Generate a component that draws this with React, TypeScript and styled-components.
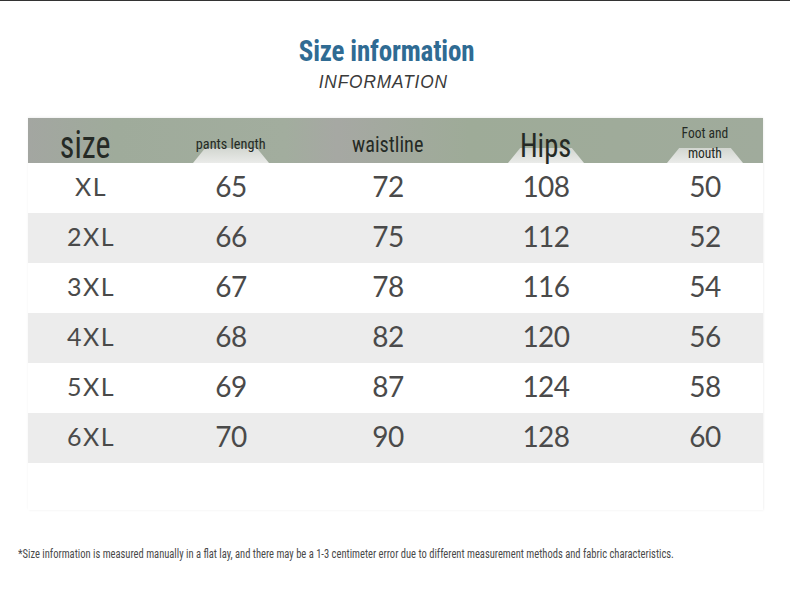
import React from "react";
import styled, { createGlobalStyle } from "styled-components";

const Global = createGlobalStyle`
  html, body { margin: 0; padding: 0; background: #ffffff; }
  body { font-family: "Liberation Sans", Arial, sans-serif; }
`;

const Page = styled.div`
  width: 790px;
  height: 601px;
  box-sizing: border-box;
  border-top: 1px solid #333333;
  display: flex;
  flex-direction: column;
  align-items: center;
  background: #ffffff;
  overflow: hidden;
`;

const Heading = styled.div`
  display: flex;
  flex-direction: column;
  align-items: center;
  padding-top: 32px;
  padding-right: 18px;
  height: 86px;
  box-sizing: border-box;
`;

const Title = styled.h1`
  margin: 0;
  font-family: "Roboto Condensed", "Liberation Sans Narrow", "DejaVu Sans Condensed", sans-serif;
  font-weight: 700;
  font-size: 30px;
  line-height: 36px;
  color: #2f6b93;
  letter-spacing: -0.2px;
  transform: scaleX(0.9);
`;

const Subtitle = styled.div`
  margin-top: 3px;
  margin-right: 6px;
  font-family: "Liberation Sans", sans-serif;
  font-style: italic;
  font-size: 18px;
  line-height: 20px;
  letter-spacing: 0.9px;
  color: #3a3a3a;
  font-weight: 400;
  transform: scaleX(0.96);
`;

const Table = styled.div`
  width: 735px;
  margin: 31px 27px 0 28px;
  display: flex;
  flex-direction: column;
  box-shadow: 0 -1px 2px rgba(0, 0, 0, 0.06), 1px 1px 2px rgba(0, 0, 0, 0.03);
`;

const cols = "126px 154px 160px 156px 139px";

const HeadRow = styled.div`
  display: grid;
  grid-template-columns: ${cols};
  grid-template-rows: 45px;
  height: 45px;
  background: linear-gradient(90deg, #a3a6a1 0%, #9fab9b 12%, #a2ad9e 35%, #a6a8a3 42%, #9eab98 60%, #a0ab9c 100%);
`;

const HeadCell = styled.div<{
  $size: number;
  $left?: number;
  $right?: number;
  $top?: number;
  $bottom?: number;
  $glow?: boolean;
  $lh?: number;
  $end?: boolean;
}>`
  position: relative;
  box-sizing: border-box;
  display: flex;
  flex-direction: column;
  align-items: center;
  justify-content: ${(p) => (p.$end ? "flex-end" : "center")};
  height: 45px;
  padding-left: ${(p) => p.$left ?? 0}px;
  padding-right: ${(p) => p.$right ?? 0}px;
  padding-top: ${(p) => p.$top ?? 0}px;
  padding-bottom: ${(p) => p.$bottom ?? 0}px;
  font-family: "Roboto Condensed", "Liberation Sans Narrow", "DejaVu Sans Condensed", sans-serif;
  font-size: ${(p) => p.$size}px;
  line-height: ${(p) => p.$lh ?? Math.round(p.$size * 1.15)}px;
  color: #252a25;
  &::before {
    content: "";
    display: ${(p) => (p.$glow ? "block" : "none")};
    position: absolute;
    bottom: 0;
    left: 50%;
    width: 76px;
    height: 15px;
    margin-left: ${(p) => ((p.$left ?? 0) - (p.$right ?? 0)) / 2 - 38}px;
    background: linear-gradient(180deg, #d2d6d0 0%, #eaebe9 100%);
    clip-path: polygon(16% 0, 84% 0, 100% 100%, 0 100%);
  }
`;

const HeadText = styled.span<{ $squeeze?: number }>`
  position: relative;
  display: inline-block;
  transform: scaleX(${(p) => p.$squeeze ?? 0.9});
  white-space: nowrap;
`;

const Row = styled.div<{ $shade: boolean }>`
  display: grid;
  grid-template-columns: ${cols};
  height: 50px;
  background: ${(p) => (p.$shade ? "#ececec" : "#ffffff")};
  align-items: center;
`;

const Cell = styled.div<{ $shift?: number; $label?: boolean }>`
  text-align: center;
  padding-left: ${(p) => p.$shift ?? 0}px;
  padding-bottom: 4px;
  font-family: "Lato", "Liberation Sans", sans-serif;
  font-weight: 400;
  font-size: ${(p) => (p.$label ? 25 : 28)}px;
  letter-spacing: ${(p) => (p.$label ? 1.5 : -0.5)}px;
  color: #4a4a4a;
`;

const EmptyRow = styled.div`
  height: 47px;
  background: #ffffff;
`;

const Note = styled.p`
  align-self: flex-start;
  margin: 37px 0 0 18px;
  font-family: "Roboto Condensed", "Liberation Sans Narrow", "DejaVu Sans Condensed", sans-serif;
  font-size: 12px;
  line-height: 14px;
  color: #4a4a4a;
  white-space: nowrap;
  transform-origin: left center;
  transform: scaleX(0.878);
`;

const rows = [
  ["XL", "65", "72", "108", "50"],
  ["2XL", "66", "75", "112", "52"],
  ["3XL", "67", "78", "116", "54"],
  ["4XL", "68", "82", "120", "56"],
  ["5XL", "69", "87", "124", "58"],
  ["6XL", "70", "90", "128", "60"],
];

export default function App() {
  return (
    <Page>
      <Global />
      <Heading>
        <Title>Size information</Title>
        <Subtitle>INFORMATION</Subtitle>
      </Heading>
      <Table>
        <HeadRow>
          <HeadCell $size={38} $right={12} $top={9} $lh={34}>
            <HeadText $squeeze={0.84}>size</HeadText>
          </HeadCell>
          <HeadCell $size={15} $top={8} $glow>
            <HeadText $squeeze={0.95}>pants length</HeadText>
          </HeadCell>
          <HeadCell $size={22} $top={8}>
            <HeadText $squeeze={0.92}>waistline</HeadText>
          </HeadCell>
          <HeadCell $size={34} $top={8} $lh={34} $glow>
            <HeadText $squeeze={0.84}>Hips</HeadText>
          </HeadCell>
          <HeadCell $size={15} $left={23} $lh={20} $end $glow>
            <HeadText>Foot and</HeadText>
            <HeadText>mouth</HeadText>
          </HeadCell>
        </HeadRow>
        {rows.map((r, i) => (
          <Row key={r[0]} $shade={i % 2 === 1}>
            <Cell $label>{r[0]}</Cell>
            <Cell>{r[1]}</Cell>
            <Cell>{r[2]}</Cell>
            <Cell>{r[3]}</Cell>
            <Cell $shift={23}>{r[4]}</Cell>
          </Row>
        ))}
        <EmptyRow />
      </Table>
      <Note>
        *Size information is measured manually in a flat lay, and there may be a 1-3 centimeter error due to different measurement methods and fabric characteristics.
      </Note>
    </Page>
  );
}
